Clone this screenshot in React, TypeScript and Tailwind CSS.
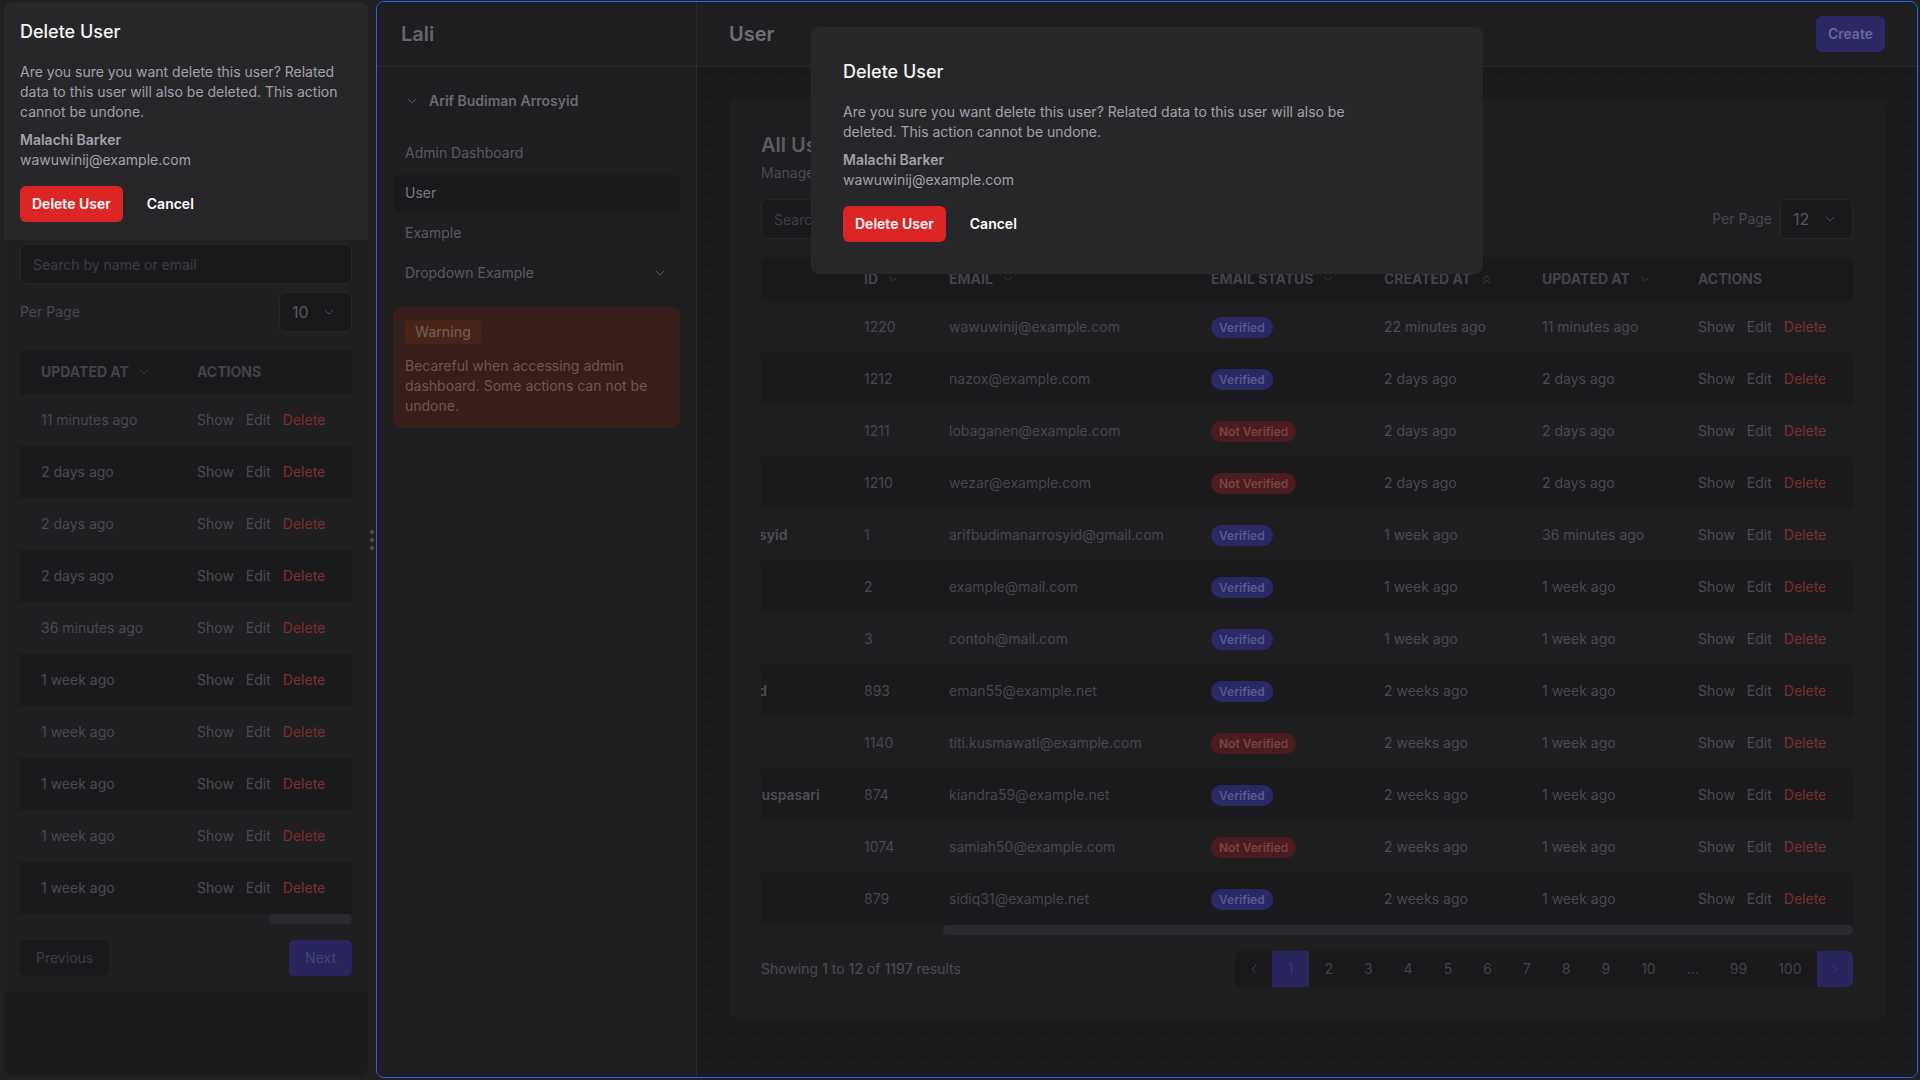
import { ChevronDown, ChevronsUp, ChevronLeft, ChevronRight } from "lucide-react";

type User = {
    name: string;
    id: number;
    email: string;
    verified: boolean;
    created: string;
    updated: string;
};

const users: User[] = [
    { name: "Malachi Barker", id: 1220, email: "wawuwinij@example.com", verified: true, created: "22 minutes ago", updated: "11 minutes ago" },
    { name: "Nazox Hartono", id: 1212, email: "nazox@example.com", verified: true, created: "2 days ago", updated: "2 days ago" },
    { name: "Loba Ganen", id: 1211, email: "lobaganen@example.com", verified: false, created: "2 days ago", updated: "2 days ago" },
    { name: "Wezar Putra", id: 1210, email: "wezar@example.com", verified: false, created: "2 days ago", updated: "2 days ago" },
    { name: "Arif Budiman Arrosyid", id: 1, email: "arifbudimanarrosyid@gmail.com", verified: true, created: "1 week ago", updated: "36 minutes ago" },
    { name: "Example User", id: 2, email: "example@mail.com", verified: true, created: "1 week ago", updated: "1 week ago" },
    { name: "Contoh User", id: 3, email: "contoh@mail.com", verified: true, created: "1 week ago", updated: "1 week ago" },
    { name: "Emanuel Retherfod", id: 893, email: "eman55@example.net", verified: true, created: "2 weeks ago", updated: "1 week ago" },
    { name: "Titi Kusmawati", id: 1140, email: "titi.kusmawati@example.com", verified: false, created: "2 weeks ago", updated: "1 week ago" },
    { name: "Kiandra Kusuma Puspasari", id: 874, email: "kiandra59@example.net", verified: true, created: "2 weeks ago", updated: "1 week ago" },
    { name: "Samiah Lestari", id: 1074, email: "samiah50@example.com", verified: false, created: "2 weeks ago", updated: "1 week ago" },
    { name: "Sidiq Pratama", id: 879, email: "sidiq31@example.net", verified: true, created: "2 weeks ago", updated: "1 week ago" },
];

function SortLabel({ label, up }: { label: string; up?: boolean }) {
    return (
        <span className="inline-flex items-center gap-2">
            {label}
            {up ? <ChevronsUp size={15} strokeWidth={1.5} /> : <ChevronDown size={14} strokeWidth={1.5} />}
        </span>
    );
}

// table is wider than its box; justify-end keeps the right end in view (scrolled to the end)
function UsersTable({ rows }: { rows: User[] }) {
    return (
        <div className="flex justify-end overflow-hidden rounded-t-md">
            <div className="w-[1310px] shrink-0">
                <table className="w-full table-fixed text-left text-sm">
                    <colgroup>
                        <col className="w-[75px]" />
                        <col className="w-[226px]" />
                        <col className="w-[85px]" />
                        <col className="w-[262px]" />
                        <col className="w-[173px]" />
                        <col className="w-[158px]" />
                        <col className="w-[156px]" />
                        <col className="w-[175px]" />
                    </colgroup>
                    <thead className="bg-[#19191b] font-bold uppercase text-[#434349]">
                        <tr className="h-11">
                            <th className="px-5">
                                <span className="block size-4 rounded border border-[#2c2c30]" />
                            </th>
                            <th className="px-5"><SortLabel label="Name" /></th>
                            <th className="px-5"><SortLabel label="ID" /></th>
                            <th className="px-5"><SortLabel label="Email" /></th>
                            <th className="px-5"><SortLabel label="Email Status" /></th>
                            <th className="px-5"><SortLabel label="Created At" up /></th>
                            <th className="px-5"><SortLabel label="Updated At" /></th>
                            <th className="px-5">Actions</th>
                        </tr>
                    </thead>
                    <tbody className="text-[#47474d]">
                        {rows.map((u, i) => (
                            <tr key={u.id} className={i % 2 === 1 ? "h-[52px] bg-[#1a1a1c]" : "h-[52px]"}>
                                <td className="px-5">
                                    <span className="block size-4 rounded border border-[#2c2c30]" />
                                </td>
                                <td className="whitespace-nowrap px-5 font-semibold text-[#4e4e54]">{u.name}</td>
                                <td className="px-5">{u.id}</td>
                                <td className="whitespace-nowrap px-5">{u.email}</td>
                                <td className="px-5">
                                    {u.verified ? (
                                        <span className="rounded-full bg-[#2a2865] px-2 py-[3px] text-xs font-semibold leading-[17px] text-[#5b5a8e]">
                                            Verified
                                        </span>
                                    ) : (
                                        <span className="rounded-full bg-[#4a1c1f] px-2 py-[3px] text-xs font-semibold leading-[17px] text-[#7c4447]">
                                            Not Verified
                                        </span>
                                    )}
                                </td>
                                <td className="whitespace-nowrap px-5 text-[#4a4a50]">{u.created}</td>
                                <td className="whitespace-nowrap px-5 text-[#4a4a50]">{u.updated}</td>
                                <td className="px-5">
                                    <div className="flex gap-3">
                                        <span className="text-[#4b4b51]">Show</span>
                                        <span className="text-[#4b4b51]">Edit</span>
                                        <span className="text-[#7b2f33]">Delete</span>
                                    </div>
                                </td>
                            </tr>
                        ))}
                    </tbody>
                </table>
            </div>
        </div>
    );
}

function PerPage({ value }: { value: string }) {
    return (
        <div className="flex h-10 w-[73px] items-center justify-between rounded-md border border-[#262629] bg-[#19191b] pl-3 pr-3.5 text-base text-[#55555b]">
            {value}
            <ChevronDown size={16} strokeWidth={1.5} className="text-[#4a4a50]" />
        </div>
    );
}

function DeleteDialog({ className }: { className: string }) {
    return (
        <div className={"absolute bg-[#27272a] " + className}>
            <h2 className="text-lg font-medium text-[#f4f4f5]">Delete User</h2>
            <p className="mt-4 max-w-lg text-sm text-[#a1a1aa]">
                Are you sure you want delete this user? Related data to this user will also be deleted. This action cannot be undone.
            </p>
            <p className="mt-2 text-sm font-semibold text-[#a1a1aa]">Malachi Barker</p>
            <p className="text-sm text-[#a1a1aa]">wawuwinij@example.com</p>
            <div className="mt-4 flex gap-3">
                <button className="h-9 rounded-md bg-[#dc2626] px-3 text-sm font-semibold text-white">Delete User</button>
                <button className="h-9 px-3 text-sm font-semibold text-white">Cancel</button>
            </div>
        </div>
    );
}

const pages = ["1", "2", "3", "4", "5", "6", "7", "8", "9", "10", "...", "99", "100"];

export default function App() {
    return (
        <div className="flex h-screen w-full bg-[#202023] pb-[2px] pl-[4px] pr-[2px] pt-[1px] font-['Inter',sans-serif]">

            {/* mobile preview */}
            <div className="relative mb-[2px] mt-[1px] flex w-[364px] shrink-0 flex-col overflow-hidden rounded-lg bg-[#1b1b1d]">
                <header className="flex h-[66px] shrink-0 items-center justify-between border-b border-[#29292c] bg-[#1e1e21] px-4">
                    <span className="text-xl font-semibold text-[#6e6e75]">User</span>
                    <span className="rounded-md bg-[#2b2863] px-3 py-2 text-sm font-semibold text-[#67669a]">Create</span>
                </header>
                <section className="bg-[#1f1f22] p-4">
                    <div className="h-[144px]">
                        <h2 className="text-xl font-semibold text-[#5c5c63]">All Users</h2>
                        <p className="mt-1 text-sm text-[#4a4a50]">Manage all registered users</p>
                    </div>
                    <input
                        placeholder="Search by name or email"
                        className="mt-4 h-10 w-full rounded-md border border-[#262629] bg-[#19191b] px-3 text-sm placeholder:text-[#3d3d43]"
                    />
                    <div className="mt-2 flex items-center justify-between">
                        <span className="text-sm text-[#48484e]">Per Page</span>
                        <PerPage value="10" />
                    </div>
                    <div className="mt-[18px]">
                        <UsersTable rows={users.slice(0, 10)} />
                    </div>
                    <div className="flex h-2.5 justify-end">
                        <div className="h-full w-[25.4%] rounded-full bg-[#2a2a2e]" />
                    </div>
                    <div className="mt-4 flex justify-between">
                        <span className="flex h-9 items-center rounded-md bg-[#19191b] px-4 text-sm text-[#3c3c42]">Previous</span>
                        <span className="flex h-9 items-center rounded-md bg-[#28265c] px-4 text-sm text-[#45447a]">Next</span>
                    </div>
                </section>

                <DeleteDialog className="inset-x-0 top-0 rounded-t-lg p-4 pb-[18px]" />
            </div>

            {/* resize handle */}
            <div className="flex w-2 shrink-0 flex-col items-center justify-center gap-1">
                <span className="size-1 rounded-full bg-[#4b4b50]" />
                <span className="size-1 rounded-full bg-[#4b4b50]" />
                <span className="size-1 rounded-full bg-[#4b4b50]" />
            </div>

            {/* desktop preview */}
            <div className="relative flex min-w-0 flex-1 flex-col overflow-hidden rounded-lg border border-[#2a62e8]">
                <header className="flex h-[65px] shrink-0 border-b border-[#29292c] bg-[#1e1e21]">
                    <div className="flex w-80 shrink-0 items-center border-r border-[#29292c] px-6">
                        <span className="text-xl font-semibold text-[#66666d]">Lali</span>
                    </div>
                    <div className="flex flex-1 items-center justify-between px-8">
                        <span className="text-xl font-semibold text-[#6e6e75]">User</span>
                        <span className="flex h-9 items-center rounded-md bg-[#2b2863] px-3 text-sm font-semibold text-[#67669a]">Create</span>
                    </div>
                </header>

                <div className="flex min-h-0 flex-1">
                    <aside className="w-80 shrink-0 border-r border-[#29292c] bg-[#1e1e21] px-4 pt-4">
                        <div className="flex h-9 items-center gap-2.5 px-3 text-sm font-semibold text-[#6a6a71]">
                            <ChevronDown size={14} strokeWidth={1.5} />
                            Arif Budiman Arrosyid
                        </div>
                        <nav className="mt-4 flex flex-col gap-1 text-sm text-[#5a5a61]">
                            <span className="flex h-9 items-center rounded-md px-3">Admin Dashboard</span>
                            <span className="flex h-9 items-center rounded-md bg-[#19191b] px-3 text-[#7a7a81]">User</span>
                            <span className="flex h-9 items-center rounded-md px-3">Example</span>
                            <span className="flex h-9 items-center justify-between rounded-md px-3">
                                Dropdown Example
                                <ChevronDown size={16} strokeWidth={1.5} className="text-[#55555b]" />
                            </span>
                        </nav>
                        <div className="mt-4 rounded-lg bg-[#361f1a] p-3">
                            <span className="inline-block rounded bg-[#4b2418] px-2.5 py-0.5 text-sm font-medium text-[#6f5a50]">Warning</span>
                            <p className="mt-3 text-sm text-[#72574c]">
                                Becareful when accessing admin dashboard. Some actions can not be undone.
                            </p>
                        </div>
                    </aside>

                    <main className="min-w-0 flex-1 bg-[#1a1a1c] bg-[radial-gradient(circle,#242427_1px,transparent_1.5px)] p-8 [background-size:24px_24px]">
                        <section className="rounded-lg bg-[#1e1e21] p-8">
                            <h2 className="text-xl font-semibold text-[#5c5c63]">All Users</h2>
                            <p className="mt-1 text-sm text-[#4a4a50]">Manage all registered users</p>
                            <div className="mt-4 flex items-center justify-between">
                                <input
                                    placeholder="Search by name or email"
                                    className="h-10 w-96 rounded-md border border-[#262629] bg-[#19191b] px-3 text-sm placeholder:text-[#3d3d43]"
                                />
                                <div className="flex items-center gap-2">
                                    <span className="text-sm text-[#48484e]">Per Page</span>
                                    <PerPage value="12" />
                                </div>
                            </div>
                            <div className="mt-[18px]">
                                <UsersTable rows={users} />
                            </div>
                            <div className="flex h-2.5 justify-end">
                                <div className="h-full w-[83.3%] rounded-full bg-[#2a2a2e]" />
                            </div>
                            <div className="mt-4 flex items-center justify-between">
                                <p className="text-sm text-[#4a4a50]">
                                    Showing <span className="font-medium">1</span> to <span className="font-medium">12</span> of{" "}
                                    <span className="font-medium">1197</span> results
                                </p>
                                <div className="flex h-9 overflow-hidden rounded-md bg-[#19191b] text-sm text-[#424248]">
                                    <span className="flex w-[37px] items-center justify-center">
                                        <ChevronLeft size={16} strokeWidth={1.5} />
                                    </span>
                                    {pages.map((p) => (
                                        <span
                                            key={p}
                                            className={
                                                p === "1"
                                                    ? "flex items-center bg-[#28265c] px-[15.5px] text-[#3d3b78]"
                                                    : "flex items-center px-[15.5px]"
                                            }
                                        >
                                            {p}
                                        </span>
                                    ))}
                                    <span className="flex w-9 items-center justify-center bg-[#28265c] text-[#3d3b78]">
                                        <ChevronRight size={16} strokeWidth={1.5} />
                                    </span>
                                </div>
                            </div>
                        </section>
                    </main>
                </div>

                <DeleteDialog className="inset-x-0 top-[25px] mx-auto w-[672px] rounded-lg p-8 pt-[31px]" />
            </div>
        </div>
    );
}
